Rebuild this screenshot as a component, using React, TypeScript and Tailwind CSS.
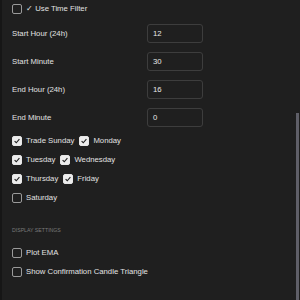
import React from 'react';

const Box = ({ checked }: { checked?: boolean }) => (
  <span
    className={`flex h-[10px] w-[10px] shrink-0 items-center justify-center rounded-[2px] border ${
      checked ? 'border-[#e6e6e6] bg-[#ececec]' : 'border-[#9a9a9a] bg-transparent'
    }`}
  >
    {checked && (
      <svg viewBox="0 0 10 10" className="h-[8px] w-[8px]">
        <path d="M2 5.2 L4.1 7.2 L8 2.8" fill="none" stroke="#1f1f1f" strokeWidth="1.4" />
      </svg>
    )}
  </span>
);

const Check = ({ label, checked }: { label: string; checked?: boolean }) => (
  <label className="flex h-[10px] items-center gap-[4px]">
    <Box checked={checked} />
    <span>{label}</span>
  </label>
);

const Field = ({ label, value }: { label: string; value: string }) => (
  <div className="flex h-[19px] items-center justify-between pr-[97px]">
    <span>{label}</span>
    <div className="flex h-[19px] w-[56px] items-center rounded-[3px] border border-[#3d3d3d] pl-[5px] text-[#e8e8e8]">
      {value}
    </div>
  </div>
);

export default function App() {
  return (
    <div
      className="relative h-[300px] w-[300px] overflow-hidden border-l-2 border-[#161616] bg-[#1f1f1f] text-[7.75px] leading-[10px] text-[#e2e2e2]"
      style={{ fontFamily: '"Liberation Sans", Arial, sans-serif' }}
    >
      <div className="absolute left-[-2px] top-[21px] h-[6px] w-[2px] bg-[#1e7a4a]" />

      <div className="flex flex-col pl-[10px] pt-[4px]">
        <div className="flex h-[10px] items-center gap-[4px]">
          <Box />
          <span>✓ Use Time Filter</span>
        </div>

        <div className="mt-[10px] flex flex-col gap-[9px]">
          <Field label="Start Hour (24h)" value="12" />
          <Field label="Start Minute" value="30" />
          <Field label="End Hour (24h)" value="16" />
          <Field label="End Minute" value="0" />
        </div>

        <div className="mt-[9px] flex flex-col gap-[9px]">
          <div className="flex items-center gap-[5px]">
            <Check label="Trade Sunday" checked />
            <Check label="Monday" checked />
          </div>
          <div className="flex items-center gap-[5px]">
            <Check label="Tuesday" checked />
            <Check label="Wednesday" checked />
          </div>
          <div className="flex items-center gap-[5px]">
            <Check label="Thursday" checked />
            <Check label="Friday" checked />
          </div>
          <Check label="Saturday" />
        </div>

        <div className="mt-[22px] text-[5.2px] uppercase text-[#7a7a7a]">Display Settings</div>

        <div className="mt-[13px] flex flex-col gap-[9px]">
          <Check label="Plot EMA" />
          <Check label="Show Confirmation Candle Triangle" />
        </div>
      </div>

      <div className="absolute right-[1px] top-[113px] h-[187px] w-[3px] bg-[#5f5f68]" />
    </div>
  );
}
